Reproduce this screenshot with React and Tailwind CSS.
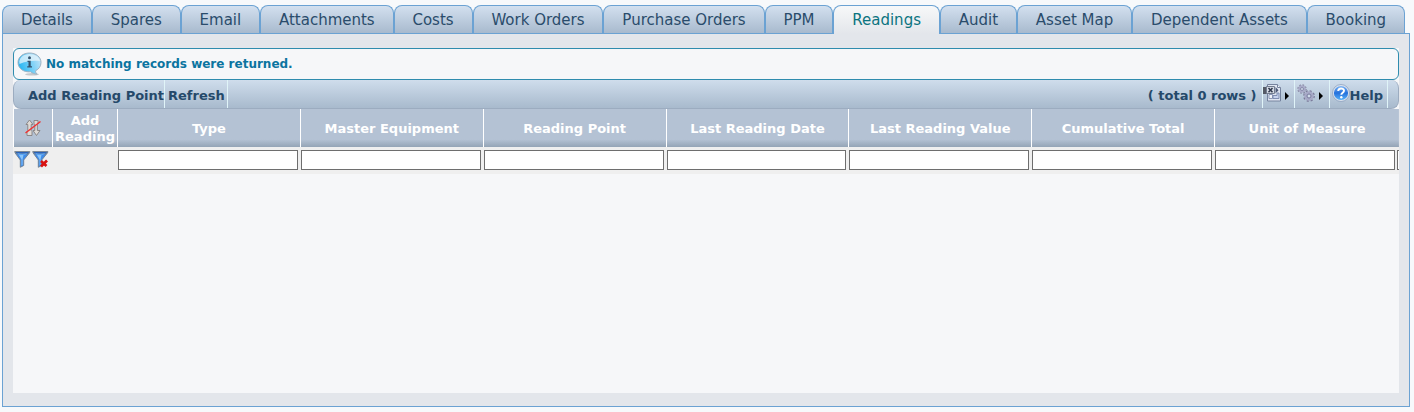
import { useState } from 'react';

const TABS = [
  'Details',
  'Spares',
  'Email',
  'Attachments',
  'Costs',
  'Work Orders',
  'Purchase Orders',
  'PPM',
  'Readings',
  'Audit',
  'Asset Map',
  'Dependent Assets',
  'Booking',
];

const COLUMNS = [
  'Type',
  'Master Equipment',
  'Reading Point',
  'Last Reading Date',
  'Last Reading Value',
  'Cumulative Total',
  'Unit of Measure',
];

function InfoIcon() {
  return (
    <svg width="25" height="24" viewBox="0 0 25 24" aria-hidden="true">
      <defs>
        <linearGradient id="info" x1="0" y1="0.6" x2="1" y2="0.3">
          <stop offset="0" stopColor="#22b4f2" />
          <stop offset="0.5" stopColor="#6fcdf7" />
          <stop offset="1" stopColor="#bfe3f8" />
        </linearGradient>
      </defs>
      <ellipse cx="15" cy="22.300" rx="7" ry="1.200" fill="#c4c8cc" />
      <path d="M12.500 1C19 1 24 5 24 10.500c0 4-2.300 6.800-5.500 8.300 0 1.400.6 2.400 1.600 3.300-2.800-.1-5-1-6.500-2.300C6.500 20.500 1 16.300 1 10.500 1 5 6 1 12.500 1z" fill="url(#info)" stroke="#9fb2c2" strokeWidth="1" />
      <path d="M12.500 2C18 2 22 5 23 9c-6-.8-14 0-20.500 3C1 6 6.500 2 12.500 2z" fill="#e8f4fb" opacity="0.750" />
      <circle cx="12.500" cy="5.800" r="1.500" fill="#35536e" />
      <path d="M10.500 8.800h3.200v5.400h1.300v1.300h-4.800v-1.300h1.300V10h-1z" fill="#35536e" />
    </svg>
  );
}

function ClearSortIcon() {
  return (
    <svg width="16" height="18" viewBox="0 0 16 18" className="mx-auto" aria-hidden="true">
      <path d="M4.500 1L1 5.500h1.800v6L2 12.500v4h5v-4l-.8-1v-6H8z" fill="#dedad6" stroke="#858080" strokeWidth="0.900" />
      <path d="M9 1.500h4v3.300l-.6.700v6H15L11.500 16.500 8 11.500h1.800v-6L9 4.800z" fill="#dedad6" stroke="#858080" strokeWidth="0.900" />
      <path d="M.5 14L15.500 2.500" stroke="#f03030" strokeWidth="1.400" />
    </svg>
  );
}

function FunnelIcon({ clear }) {
  return (
    <svg width="17" height="18" viewBox="0 0 17 18" aria-hidden="true">
      <path d="M.8 2.500L6.300 10v7.300l3.400-1.800V10L15.800 2.500z" fill="#3f8be8" stroke="#6d7f92" strokeWidth="0.900" />
      <path d="M5 5l2.600 4.500v6l.9-.5V9.500L9.500 5z" fill="#8cc6fa" />
      <path d="M.7 1.500h15.200l-2 2.500H2.800z" fill="#2a62b8" stroke="#7e8890" strokeWidth="0.900" />
      <path d="M3 2.800c3 1.200 7.500 1.200 10.500 0L11 5H5z" fill="#5aa5f5" />
      {clear && <path d="M9 11l5.500 5M15 10.500L9 16.500" stroke="#d81212" strokeWidth="2.700" />}
    </svg>
  );
}

function ExportIcon() {
  return (
    <svg width="18" height="18" viewBox="0 0 18 18" aria-hidden="true">
      <path d="M4.500.5h10l3 3v13.500H4.500z" fill="#dfe5f1" stroke="#76839e" />
      <path d="M14.500.5v3h3" fill="#f5f7fb" stroke="#76839e" />
      <path d="M0 3h4v7H0z" fill="#555a66" />
      <path d="M3.500 2.500h8v7h-8z" fill="#d5dae4" stroke="#737d90" />
      <path d="M5.500 4l4 4.200M9.500 4l-4 4.200" stroke="#30384c" strokeWidth="1.500" />
      <path d="M12.500 3l3 3.300-3 3.200z" fill="#4e5a78" />
      <path d="M6 10.500h3.500v4H6z" fill="#f0f3f9" stroke="#8290b0" strokeWidth="0.900" />
      <path d="M10 11.500h4V9h2v5.500h-6z" fill="#c7d3ee" stroke="#7786ab" strokeWidth="0.900" />
    </svg>
  );
}

function GearsIcon() {
  return (
    <svg width="18" height="18" viewBox="0 0 18 18" aria-hidden="true">
      <circle cx="5" cy="5" r="4" fill="none" stroke="#84849f" strokeWidth="1.400" strokeDasharray="1.700 1.440" />
      <circle cx="5" cy="5" r="2.700" fill="none" stroke="#a9abc8" strokeWidth="2" />
      <circle cx="5" cy="5" r="1.500" fill="#d4dfec" stroke="#78789c" strokeWidth="0.800" />
      <circle cx="12" cy="12" r="5.100" fill="none" stroke="#777796" strokeWidth="1.500" strokeDasharray="2.100 1.905" />
      <circle cx="12" cy="12" r="3.500" fill="none" stroke="#a6a8c6" strokeWidth="2.600" />
      <circle cx="12" cy="12" r="2" fill="#d0dcea" stroke="#6e6e94" strokeWidth="0.900" />
    </svg>
  );
}

function HelpIcon() {
  return (
    <svg width="18" height="18" viewBox="0 0 18 18" aria-hidden="true">
      <defs>
        <linearGradient id="help" x1="0" y1="0" x2="0" y2="1">
          <stop offset="0" stopColor="#7fb6f5" />
          <stop offset="0.5" stopColor="#2470dc" />
          <stop offset="1" stopColor="#59b4fa" />
        </linearGradient>
      </defs>
      <circle cx="9" cy="9" r="8.500" fill="#dce3ee" stroke="#8ea2bf" strokeWidth="0.800" />
      <circle cx="9" cy="9" r="7.100" fill="url(#help)" />
      <path d="M6.200 7C6.200 3.500 12 3.700 12 6.800c0 1.900-2.700 2-2.700 4" fill="none" stroke="#fff" strokeWidth="1.900" />
      <circle cx="9.300" cy="13.200" r="1.200" fill="#fff" />
    </svg>
  );
}

function MenuArrow() {
  return (
    <svg width="4" height="8" viewBox="0 0 4 8" className="mt-2" aria-hidden="true">
      <path d="M0 0l4 4-4 4z" fill="#000" />
    </svg>
  );
}

function Tab({ label, active, onClick }) {
  return (
    <button
      type="button"
      role="tab"
      aria-selected={active}
      onClick={onClick}
      className={`flex-auto rounded-t-lg border border-b-0 border-[#6ba2d3] text-center whitespace-nowrap ${
        active
          ? 'relative -mb-px h-[29px] bg-linear-to-b from-[#f7f8f9] to-[#e3e6eb] text-[#0b7480]'
          : 'h-7 bg-linear-to-b from-[#d3e0ef] to-[#a8bace] text-[#2a4c6b]'
      }`}
    >
      {label}
    </button>
  );
}

export default function App() {
  const [activeTab, setActiveTab] = useState('Readings');

  return (
    <div className="min-h-screen bg-[#f7f9fb] pt-[5px] pr-1 pb-[5px] pl-[2px] font-['DejaVu_Sans',sans-serif] text-[13px]">
      <div role="tablist" className="mr-[5px] flex text-[15px] leading-7">
        {TABS.map((tab) => (
          <Tab key={tab} label={tab} active={tab === activeTab} onClick={() => setActiveTab(tab)} />
        ))}
      </div>

      <div className="border border-[#6ba2d3] bg-[#e3e6eb] px-[10px] pt-[14px] pb-[13px]">
        <div className="min-h-[345px] overflow-hidden bg-[#f6f7f9]">
          <div className="flex h-8 items-center gap-1 rounded-md border border-[#2f8cae] px-[3px] text-xs font-bold text-[#0b74a0]">
            <InfoIcon />
            <span>No matching records were returned.</span>
          </div>

          {/* Toolbar */}
          <div className="flex h-[29px] items-stretch rounded-lg border-x border-b border-[#9cacc0] bg-linear-to-b from-[#cfddec] to-[#a8bacd] leading-7 font-bold text-[#25496a]">
            <button type="button" className="border-r border-[#e0f4f8] pt-[2px] pl-[14px]">Add Reading Point</button>
            <button type="button" className="border-r border-[#e0f4f8] pt-[2px] pr-[2px] pl-[3px]">Refresh</button>
            <span className="ml-auto pt-[2px] pr-[5px]">( total 0 rows )</span>
            <button type="button" aria-label="Export" className="flex w-8 items-start gap-1 border-l border-[#e0f4f8] pt-1">
              <ExportIcon />
              <MenuArrow />
            </button>
            <button type="button" aria-label="Settings" className="flex w-[35px] items-start gap-1 border-l border-[#e0f4f8] pt-1 pl-[2px]">
              <GearsIcon />
              <MenuArrow />
            </button>
            <button type="button" className="mr-[10px] flex items-start border-x border-[#e0f4f8] pr-1 pl-[2px]">
              <span className="pt-1"><HelpIcon /></span>
              <span className="pt-[2px]">Help</span>
            </button>
          </div>

          <table className="w-full table-fixed border-separate border-spacing-0">
            <colgroup>
              <col className="w-[39px]" />
              <col className="w-[65px]" />
              {COLUMNS.map((col) => (
                <col key={col} />
              ))}
              <col className="w-[2px]" />
            </colgroup>
            <thead>
              <tr className="h-[38px] bg-linear-to-b from-[#b4c2d4] from-80% to-[#94a4b6] leading-4 text-white">
                <th className="border-l border-white p-0">
                  <button type="button" aria-label="Clear sort" className="block w-full">
                    <ClearSortIcon />
                  </button>
                </th>
                <th className="border-l border-white p-0 pt-px">Add Reading</th>
                {COLUMNS.map((col, i) => (
                  <th key={col} colSpan={i === COLUMNS.length - 1 ? 2 : 1} className="border-l border-white p-0 pt-px">
                    {col}
                  </th>
                ))}
              </tr>
            </thead>
            <tbody>
              <tr className="h-[27px] bg-[#efefef]">
                <td className="p-0 pb-1">
                  <div className="flex gap-px pl-px">
                    <button type="button" aria-label="Apply filter"><FunnelIcon /></button>
                    <button type="button" aria-label="Clear filter"><FunnelIcon clear /></button>
                  </div>
                </td>
                <td />
                {COLUMNS.map((col) => (
                  <td key={col} className="p-0 pr-[2px] pb-px pl-px">
                    <input
                      type="text"
                      aria-label={col}
                      className="block h-5 w-full border border-[#6e6e6e] bg-white px-1 text-xs"
                    />
                  </td>
                ))}
                <td className="p-0 pb-px">
                  <div className="h-5 border border-r-0 border-[#6e6e6e] bg-white" />
                </td>
              </tr>
            </tbody>
          </table>
        </div>
      </div>
    </div>
  );
}
